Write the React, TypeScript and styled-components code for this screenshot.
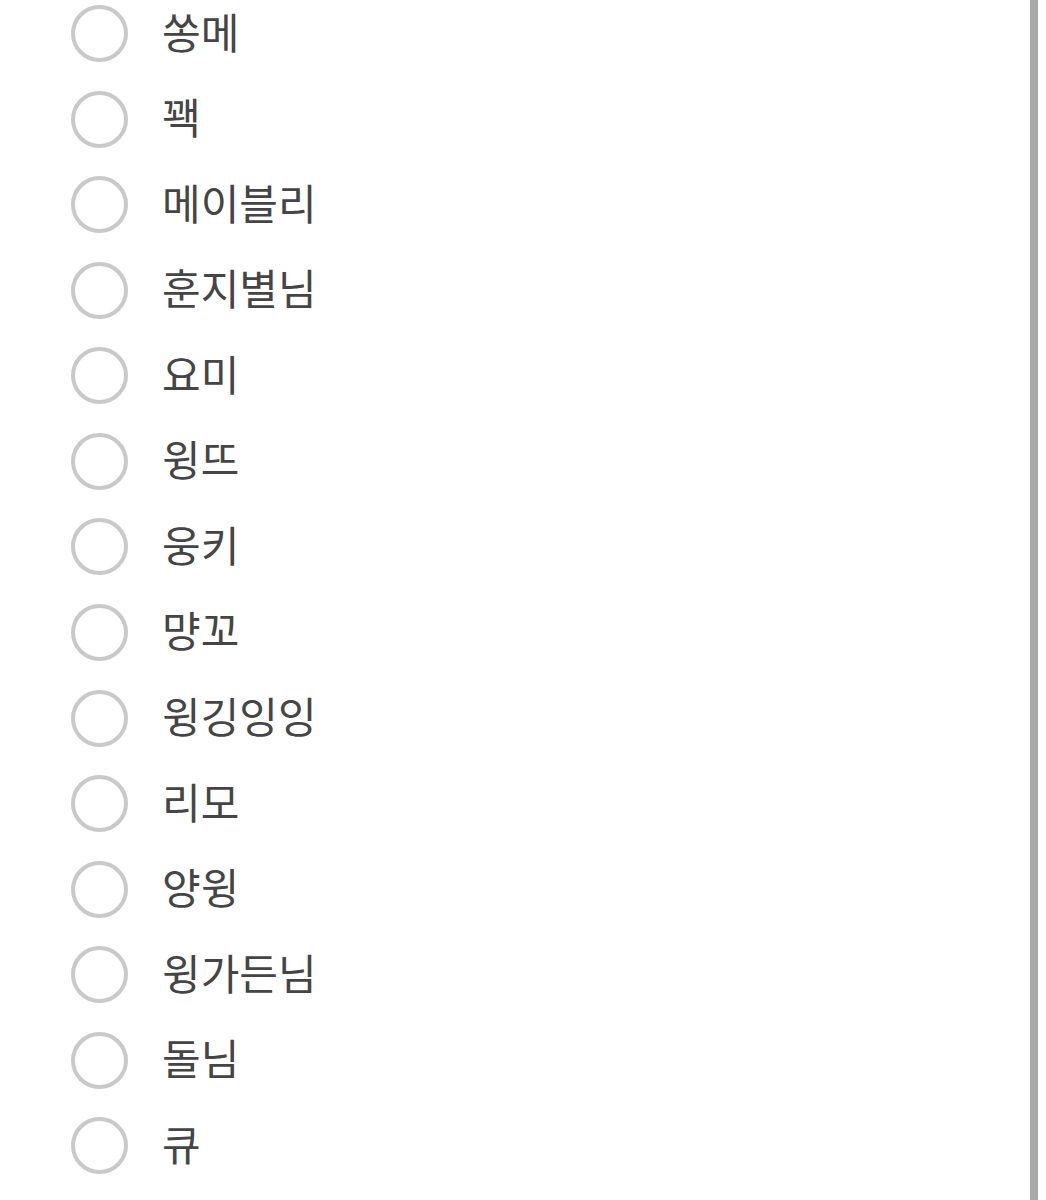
import React from 'react'
import styled, { createGlobalStyle } from 'styled-components'

const GlobalStyle = createGlobalStyle`
  html, body {
    margin: 0;
    padding: 0;
    background: #ffffff;
  }
  body {
    font-family: 'Noto Sans CJK KR', 'Noto Sans', sans-serif;
    overflow: hidden;
  }
`

const names = [
  '쏭메',
  '꽥',
  '메이블리',
  '훈지별님',
  '요미',
  '윙뜨',
  '웅키',
  '먕꼬',
  '윙깅잉잉',
  '리모',
  '양윙',
  '윙가든님',
  '돌님',
  '큐',
]

const Page = styled.div`
  display: flex;
  height: 1200px;
  overflow: hidden;
`

const List = styled.ul`
  flex: 1;
  list-style: none;
  margin: -9px 0 0;
  padding: 0 0 0 71px;
`

const Row = styled.li`
  display: flex;
  align-items: center;
  gap: 34px;
  height: 85.54px;
`

const Radio = styled.span`
  box-sizing: border-box;
  width: 57px;
  height: 57px;
  flex: 0 0 57px;
  border: 4px solid #c9c9c9;
  border-radius: 50%;
`

const Label = styled.span`
  font-size: 42px;
  line-height: 1;
  color: #454545;
  margin-top: -6px;
`

const Scrollbar = styled.div`
  width: 8px;
  margin-right: 8px;
  background: #a9a9a9;
`

const App: React.FC = () => {
  return (
    <Page>
      <GlobalStyle />
      <List>
        {names.map((name) => (
          <Row key={name}>
            <Radio />
            <Label>{name}</Label>
          </Row>
        ))}
      </List>
      <Scrollbar />
    </Page>
  )
}

export default App
